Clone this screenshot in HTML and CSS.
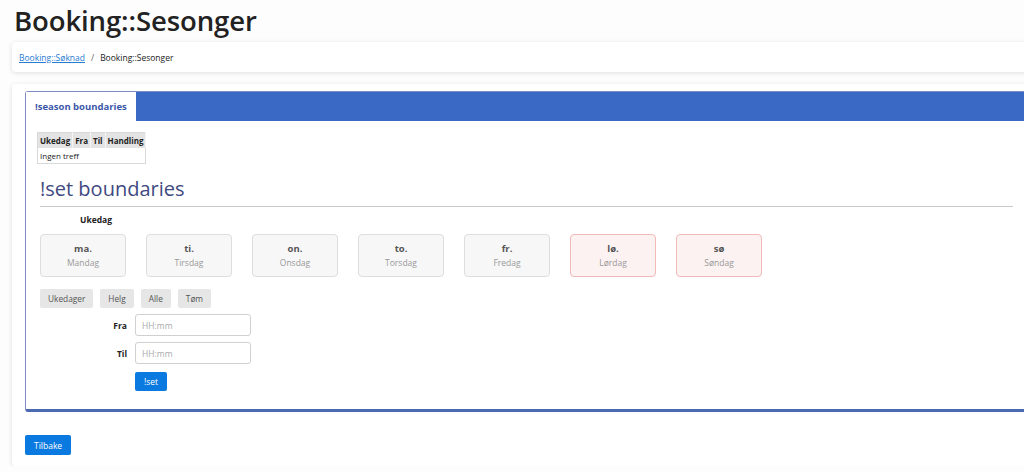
FILE: index.html
```html
<!DOCTYPE html>
<html lang="no">
<head>
    <meta charset="UTF-8">
    <title>Booking::Sesonger</title>
    <link rel="stylesheet" href="styles.css">
</head>
<body>
    <div class="page">
        <h1 class="title">Booking::Sesonger</h1>

        <!-- Breadcrumb -->
        <div class="card crumbs">
            <a href="#">Booking::Søknad</a>
            <span class="sep">/</span>
            <span>Booking::Sesonger</span>
        </div>

        <!-- Main card -->
        <div class="card main">
            <div class="tabs">
                <div class="tab-head">
                    <div class="tab active">!season boundaries</div>
                </div>
                <div class="tab-body">
                    <table class="list">
                        <tr><th>Ukedag</th><th>Fra</th><th>Til</th><th>Handling</th></tr>
                        <tr><td colspan="4">Ingen treff</td></tr>
                    </table>

                    <h2 class="section">!set boundaries</h2>

                    <div class="field-label">Ukedag</div>
                    <div class="days">
                        <div class="day"><b>ma.</b><span>Mandag</span></div>
                        <div class="day"><b>ti.</b><span>Tirsdag</span></div>
                        <div class="day"><b>on.</b><span>Onsdag</span></div>
                        <div class="day"><b>to.</b><span>Torsdag</span></div>
                        <div class="day"><b>fr.</b><span>Fredag</span></div>
                        <div class="day weekend"><b>lø.</b><span>Lørdag</span></div>
                        <div class="day weekend"><b>sø</b><span>Søndag</span></div>
                    </div>

                    <div class="quick">
                        <button class="btn-gray">Ukedager</button>
                        <button class="btn-gray">Helg</button>
                        <button class="btn-gray">Alle</button>
                        <button class="btn-gray">Tøm</button>
                    </div>

                    <div class="row">
                        <label>Fra</label>
                        <input type="text" placeholder="HH:mm">
                    </div>
                    <div class="row">
                        <label>Til</label>
                        <input type="text" placeholder="HH:mm">
                    </div>
                    <div class="row">
                        <label></label>
                        <button class="btn-blue">!set</button>
                    </div>
                </div>
            </div>

            <button class="btn-blue back">Tilbake</button>
        </div>
    </div>
</body>
</html>
```

FILE: styles.css
```css
* { box-sizing: border-box; }
html, body { margin: 0; padding: 0; overflow: hidden; }
body { background: #fdfdfd; font-family: "Open Sans", "Noto Sans", sans-serif; color: #222; }

.page { width: 1029px; margin-left: 12px; }

.title { margin: 0 0 0 2px; font-size: 27.5px; font-weight: 600; line-height: 42px; color: #222; letter-spacing: -0.1px; }

/* Cards */
.card { background: #fff; border-radius: 4px; box-shadow: 0 1px 5px rgba(0, 0, 0, 0.12); }

.crumbs { height: 30px; display: flex; align-items: center; padding: 0 7px; font-size: 8.5px; color: #222; }
.crumbs a { color: #2a7bd3; }
.crumbs .sep { margin: 0 6px; color: #666; }

.main { margin-top: 12px; padding: 7px 12px 11px 13px; }

/* Tab panel */
.tabs { border: 1px solid #7d8cc4; border-bottom: 3px solid #4a69b0; border-radius: 3px 0 0 3px; }
.tab-head { display: flex; height: 29px; background: #3a69c5; }
.tab { padding: 0 9px; line-height: 29px; font-size: 9.5px; font-weight: 700; color: #3b58a8; background: #fff; }
.tab-body { padding: 11px 15px 18px 11px; }

/* Result table */
.list { border-collapse: collapse; border: 1px solid #d8d8d8; font-size: 8px; }
.list th { background: #e3e3e3; padding: 2px 2px; text-align: left; font-weight: 700; border-right: 1px solid #f4f4f4; }
.list td { padding: 2px 2px; }

/* Section heading */
.section { margin: 12px 0 0 3px; padding-bottom: 4px; font-size: 20px; font-weight: 500; color: #3f4a80; border-bottom: 1px solid #c8c8c8; line-height: 26px; }

.field-label { margin: 5px 0 0 43px; font-size: 8.5px; font-weight: 700; line-height: 16px; }

/* Weekday picker */
.days { display: flex; gap: 20px; margin: 6px 0 0 3px; }
.day {
    width: 86px; height: 43px; display: flex; flex-direction: column; align-items: center; justify-content: center;
    border: 1.5px solid #dedede; border-radius: 4px; background: #f7f7f7;
}
.day b { font-size: 9.5px; color: #555; line-height: 14px; }
.day span { font-size: 8.5px; color: #999; line-height: 14px; }
.day.weekend { border-color: #f2b9b9; background: #fdf2f2; }

/* Quick select buttons */
.quick { display: flex; gap: 7px; margin: 12px 0 0 3px; }
.btn-gray { height: 19px; padding: 0 8px; border: none; border-radius: 2px; background: #e6e6e6; color: #555; font-family: inherit; font-size: 8.3px; }

/* Time inputs */
.row { display: flex; align-items: center; gap: 8px; margin: 6px 0 0 3px; }
.row label { width: 87px; text-align: right; font-size: 8.5px; font-weight: 700; }
.row input { width: 116px; height: 22px; border: 1px solid #d0d0d0; border-radius: 3px; padding: 0 6px; font-family: inherit; font-size: 8.5px; }
.row input::placeholder { color: #aaa; }
.row:last-child { margin-top: 8px; }

.btn-blue { height: 19px; padding: 0 9px; border: none; border-radius: 2px; background: #0a7ae0; color: #fff; font-family: inherit; font-size: 8.5px; }
.back { margin-top: 23px; height: 20px; padding: 0 9px; }
```
